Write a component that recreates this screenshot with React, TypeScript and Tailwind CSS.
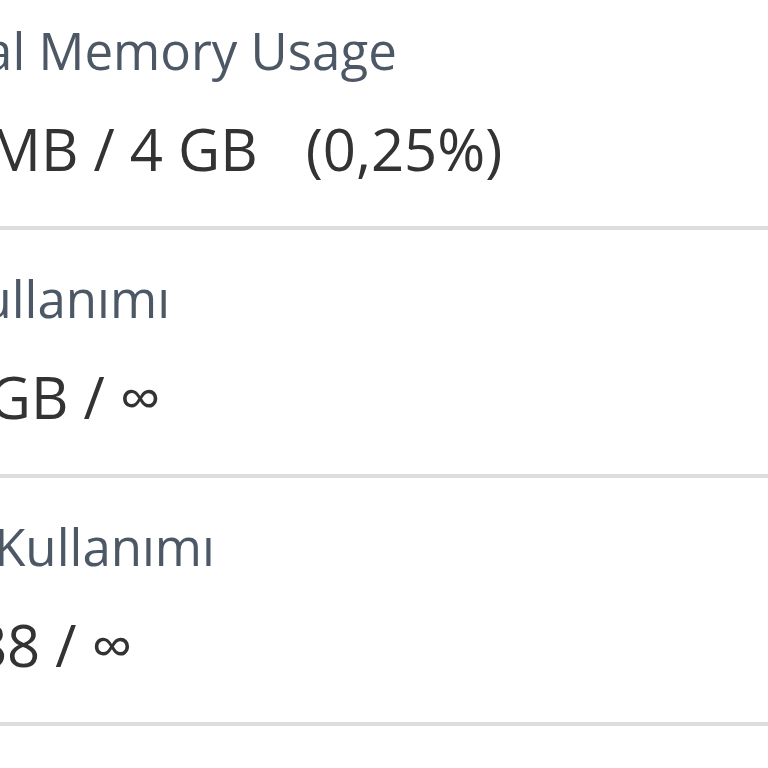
import React from "react";

const rows = [
  { label: "Physical Memory Usage", value: "10,24 MB / 4 GB", extra: "(0,25%)" },
  { label: "Disk Kullanımı", value: "12,34 GB / ∞" },
  { label: "Dosya Kullanımı", value: "123.488 / ∞" },
];

export default function App() {
  return (
    <div
      className="w-[768px] h-[768px] overflow-hidden bg-white"
      style={{ fontFamily: '"Open Sans", "Liberation Sans", sans-serif' }}
    >
      <div className="-mt-[18px] -ml-[165px] w-[1000px]">
        {rows.map((r) => (
          <div key={r.label} className="border-b-4 border-[#dddddd] pt-[32px] pb-[37px]">
            <div className="text-[51px] leading-[72px] text-[#4d5866] whitespace-nowrap">{r.label}</div>
            <div className="mt-[23px] -ml-[9px] text-[58px] leading-[80px] text-[#333333] whitespace-nowrap">
              {r.value}
              {r.extra && <span className="ml-[48px]">{r.extra}</span>}
            </div>
          </div>
        ))}
      </div>
    </div>
  );
}
